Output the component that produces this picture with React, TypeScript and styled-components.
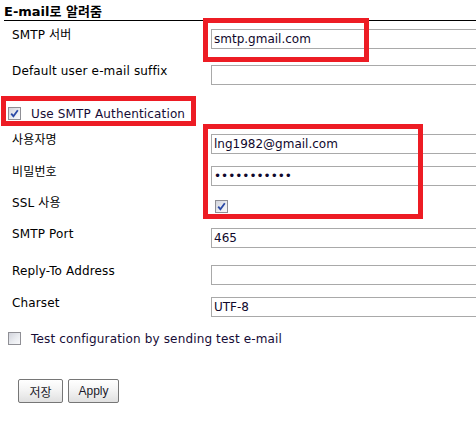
import styled, { createGlobalStyle } from "styled-components";

const GlobalStyle = createGlobalStyle`
  html, body {
    margin: 0;
    padding: 0;
    background: #fff;
  }
  body {
    font-family: "DejaVu Sans", "Noto Sans CJK KR", sans-serif;
    font-size: 12px;
    color: #000;
  }
`;

const Page = styled.div`
  position: relative;
  width: 476px;
  height: 433px;
  overflow: hidden;
`;

const Header = styled.div`
  box-sizing: border-box;
  height: 21px;
  margin-left: 4px;
  padding-top: 4px;
  line-height: 16px;
  font-size: 13px;
  font-weight: bold;
  border-bottom: 1px solid #000;
`;

const Row = styled.div<{ h: number }>`
  display: grid;
  grid-template-columns: 199px 300px;
  height: ${(p) => p.h}px;
  padding-left: 12px;
`;

const Label = styled.div`
  padding-top: 6px;
  line-height: 16px;
  letter-spacing: 0.15px;
`;

const Field = styled.input`
  box-sizing: border-box;
  margin: 8px 0 0;
  width: 290px;
  height: 20px;
  padding: 0 2px;
  border: 1px solid #a9a9a9;
  outline: none;
  font-family: "DejaVu Sans", sans-serif;
  font-size: 12px;
  color: #10082c;
  background: #fff;
`;

const CheckRow = styled.label<{ h: number; top: number }>`
  display: flex;
  align-items: flex-start;
  gap: 10px;
  box-sizing: border-box;
  height: ${(p) => p.h}px;
  padding: ${(p) => p.top}px 0 0 8px;
`;

const CheckText = styled.span`
  line-height: 16px;
  color: #160c36;
  letter-spacing: 0.15px;
`;

const Box = styled.span<{ checked?: boolean }>`
  box-sizing: border-box;
  display: inline-flex;
  align-items: center;
  justify-content: center;
  width: 13px;
  height: 13px;
  margin-top: 1px;
  border: 1px solid #8f8f95;
  background: linear-gradient(135deg, #d2d4dc 0%, #eceef2 60%, #f8f8fa 100%);
  flex: none;
`;

const SslCell = styled.div`
  padding: 10px 0 0 4px;
`;

const ButtonBar = styled.div`
  display: flex;
  gap: 5px;
  padding: 24px 0 0 18px;
`;

const Button = styled.button<{ w: number }>`
  box-sizing: border-box;
  width: ${(p) => p.w}px;
  height: 24px;
  padding: 0;
  border: 1px solid #767676;
  border-radius: 2px;
  background: linear-gradient(#ffffff 0%, #f4f4f4 45%, #e0e0e0 100%);
  font-family: "Liberation Sans", "Noto Sans CJK KR", sans-serif;
  font-size: 12px;
  color: #1a1a2a;
`;

const Mark = styled.div<{ x: number; y: number; w: number; h: number }>`
  position: absolute;
  left: ${(p) => p.x}px;
  top: ${(p) => p.y}px;
  width: ${(p) => p.w}px;
  height: ${(p) => p.h}px;
  box-sizing: border-box;
  border: 5px solid #ed1c24;
  pointer-events: none;
`;

function Check({ checked }: { checked?: boolean }) {
  return (
    <Box checked={checked}>
      {checked && (
        <svg width="9" height="9" viewBox="0 0 9 9">
          <path d="M1.2 4.6 L3.4 7.2 L7.8 1.2" fill="none" stroke="#2b4aa6" strokeWidth="1.8" />
        </svg>
      )}
    </Box>
  );
}

export default function App() {
  return (
    <Page>
      <GlobalStyle />
      <Header>E-mail로 알려줌</Header>

      <Row h={36}>
        <Label>SMTP 서버</Label>
        <Field defaultValue="smtp.gmail.com" />
      </Row>
      <Row h={36}>
        <Label>Default user e-mail suffix</Label>
        <Field defaultValue="" />
      </Row>

      <CheckRow h={33} top={13}>
        <Check checked />
        <CheckText>Use SMTP Authentication</CheckText>
      </CheckRow>

      <Row h={32}>
        <Label>사용자명</Label>
        <Field defaultValue="lng1982@gmail.com" />
      </Row>
      <Row h={31}>
        <Label>비밀번호</Label>
        <Field type="password" defaultValue="12345678901" />
      </Row>
      <Row h={31}>
        <Label>SSL 사용</Label>
        <SslCell>
          <Check checked />
        </SslCell>
      </Row>
      <Row h={37}>
        <Label>SMTP Port</Label>
        <Field defaultValue="465" />
      </Row>
      <Row h={32}>
        <Label>Reply-To Address</Label>
        <Field defaultValue="" />
      </Row>
      <Row h={36}>
        <Label>Charset</Label>
        <Field defaultValue="UTF-8" />
      </Row>

      <CheckRow h={30} top={6}>
        <Check />
        <CheckText>Test configuration by sending test e-mail</CheckText>
      </CheckRow>

      <ButtonBar>
        <Button w={45}>저장</Button>
        <Button w={51}>Apply</Button>
      </ButtonBar>

      <Mark x={203} y={18} w={166} h={44} />
      <Mark x={1} y={96} w={195} h={30} />
      <Mark x={203} y={124} w={220} h={95} />
    </Page>
  );
}
